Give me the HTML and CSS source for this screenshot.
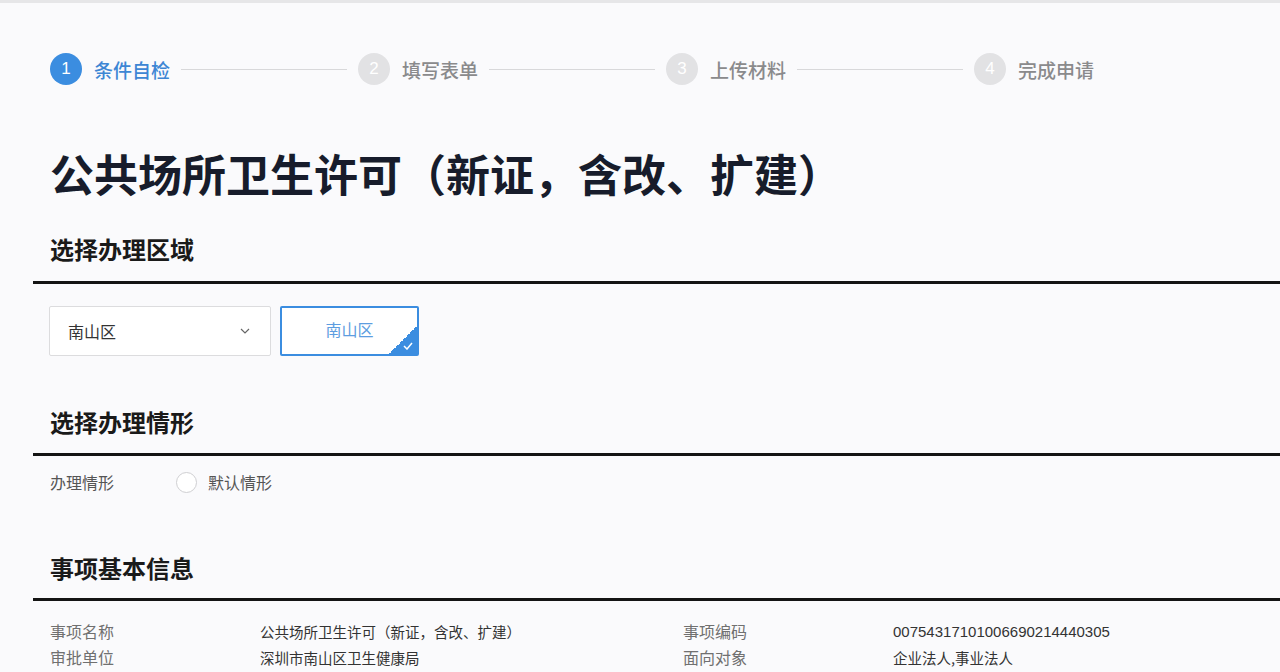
FILE: index.html
```html
<!DOCTYPE html>
<html>
<head>
    <meta charset="utf-8">
    <title>公共场所卫生许可</title>
    <link rel="stylesheet" href="styles.css">
</head>
<body>
    <div class="top-bar"></div>

    <div class="steps">
        <div class="step active">
            <span class="step-num">1</span>
            <span class="step-name">条件自检</span>
        </div>
        <span class="step-line"></span>
        <div class="step">
            <span class="step-num">2</span>
            <span class="step-name">填写表单</span>
        </div>
        <span class="step-line"></span>
        <div class="step">
            <span class="step-num">3</span>
            <span class="step-name">上传材料</span>
        </div>
        <span class="step-line"></span>
        <div class="step">
            <span class="step-num">4</span>
            <span class="step-name">完成申请</span>
        </div>
    </div>

    <h1 class="page-title">公共场所卫生许可（新证，含改、扩建）</h1>

    <div class="section-head">选择办理区域</div>
    <div class="region-row">
        <div class="select-box">
            <span>南山区</span>
            <svg class="chevron" width="10" height="6" viewBox="0 0 10 6">
                <path d="M1 1 L5 5 L9 1" fill="none" stroke="#666" stroke-width="1.2"/>
            </svg>
        </div>
        <div class="region-chip">
            南山区
            <span class="chip-corner">
                <svg width="10" height="8" viewBox="0 0 10 8">
                    <path d="M1 4 L4 7 L9 1" fill="none" stroke="#fff" stroke-width="1.5"/>
                </svg>
            </span>
        </div>
    </div>

    <div class="section-head second">选择办理情形</div>
    <div class="case-row">
        <span class="case-label">办理情形</span>
        <span class="radio"></span>
        <span class="case-option">默认情形</span>
    </div>

    <div class="section-head third">事项基本信息</div>
    <div class="info-grid">
        <span class="info-label">事项名称</span>
        <span class="info-value">公共场所卫生许可（新证，含改、扩建）</span>
        <span class="info-label">事项编码</span>
        <span class="info-value num">00754317101006690214440305</span>
        <span class="info-label">审批单位</span>
        <span class="info-value">深圳市南山区卫生健康局</span>
        <span class="info-label">面向对象</span>
        <span class="info-value">企业法人,事业法人</span>
    </div>
</body>
</html>
```

FILE: styles.css
```css
html, body {
    margin: 0;
    padding: 0;
}

body {
    background-color: #fafafc;
    font-family: "Noto Sans CJK SC", "Noto Sans", sans-serif;
    color: #222;
    overflow: hidden;
}

.top-bar {
    height: 3px;
    background-color: #e6e6e8;
}

.steps {
    display: flex;
    align-items: center;
    margin-top: 50px;
    padding-left: 50px;
}

.step {
    display: flex;
    align-items: center;
    gap: 12px;
}

.step-num {
    width: 32px;
    height: 32px;
    border-radius: 50%;
    background-color: #e2e2e4;
    color: #fff;
    font-family: "Liberation Sans", Arial, sans-serif;
    font-size: 17px;
    display: flex;
    justify-content: center;
    align-items: center;
}

.step-name {
    font-size: 19px;
    font-weight: 500;
    color: #8a8a8c;
}

.step.active .step-num {
    background-color: #3b8de0;
}

.step.active .step-name {
    color: #3d86d4;
}

.step-line {
    width: 166px;
    height: 1px;
    background-color: #d8d8da;
    margin: 0 11px;
}

.page-title {
    margin: 62px 0 0 50px;
    font-size: 44px;
    line-height: 52px;
    font-weight: 700;
    color: #171c2b;
}

.section-head {
    margin: 34px 0 0 33px;
    padding: 0 0 16px 17px;
    font-size: 24px;
    line-height: 32px;
    font-weight: 700;
    color: #1a1a1a;
    border-bottom: 3px solid #141414;
}

.section-head.second {
    margin-top: 50px;
    padding-bottom: 15px;
}

.section-head.third {
    margin-top: 60px;
    padding-bottom: 14px;
}

.region-row {
    display: flex;
    gap: 9px;
    margin: 22px 0 0 49px;
}

.select-box {
    box-sizing: border-box;
    width: 222px;
    height: 50px;
    border: 1px solid #dcdcde;
    border-radius: 2px;
    background-color: #fff;
    display: flex;
    align-items: center;
    justify-content: space-between;
    padding: 0 20px 0 18px;
    font-size: 16px;
    color: #333;
}

.region-chip {
    position: relative;
    box-sizing: border-box;
    width: 139px;
    height: 50px;
    border: 2px solid #3b8de0;
    border-radius: 2px;
    background-color: #fff;
    display: flex;
    align-items: center;
    justify-content: center;
    padding-bottom: 4px;
    font-size: 16px;
    color: #5d9de0;
}

.chip-corner {
    position: absolute;
    right: 0;
    bottom: 0;
    width: 28px;
    height: 28px;
    background: linear-gradient(135deg, transparent 50%, #3b8de0 50%);
}

.chip-corner svg {
    position: absolute;
    right: 4px;
    bottom: 4px;
}

.case-row {
    display: flex;
    align-items: center;
    height: 20px;
    margin: 16px 0 0 50px;
    font-size: 16px;
    color: #555;
}

.case-label {
    width: 126px;
}

.radio {
    box-sizing: border-box;
    width: 21px;
    height: 21px;
    border: 1px solid #cfcfd2;
    border-radius: 50%;
    background-color: #fff;
    margin-right: 11px;
}

.info-grid {
    display: grid;
    grid-template-columns: 210px 423px 210px 1fr;
    grid-auto-rows: 26px;
    align-items: center;
    margin: 17px 0 0 50px;
}

.info-label {
    font-size: 16px;
    color: #707070;
}

.info-value {
    font-size: 14.5px;
    color: #333;
}

.info-value.num {
    font-family: "Liberation Sans", Arial, sans-serif;
    font-size: 15px;
}
```
